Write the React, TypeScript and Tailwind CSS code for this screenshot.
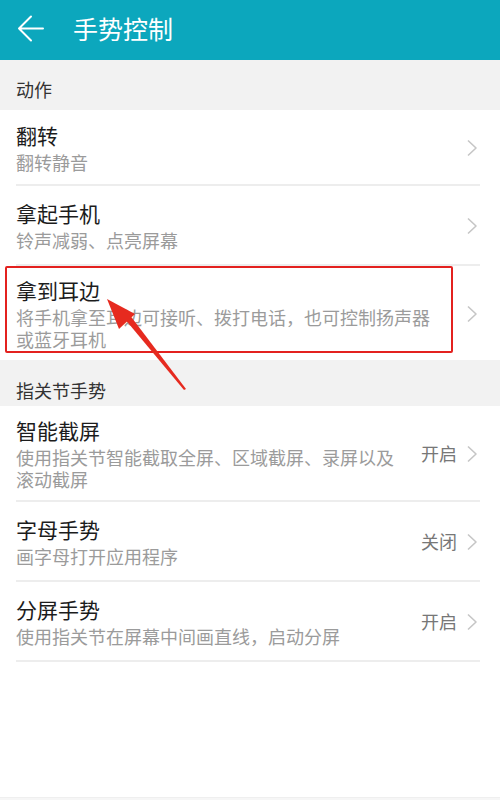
import React from "react";

type Item = {
  title: string;
  desc: string;
  value?: string;
  first?: boolean;
  last?: boolean;
};

const actions: Item[] = [
  { title: "翻转", desc: "翻转静音", first: true },
  { title: "拿起手机", desc: "铃声减弱、点亮屏幕" },
  { title: "拿到耳边", desc: "将手机拿至耳边可接听、拨打电话，也可控制扬声器或蓝牙耳机", last: true },
];

const knuckle: Item[] = [
  { title: "智能截屏", desc: "使用指关节智能截取全屏、区域截屏、录屏以及滚动截屏", value: "开启" },
  { title: "字母手势", desc: "画字母打开应用程序", value: "关闭" },
  { title: "分屏手势", desc: "使用指关节在屏幕中间画直线，启动分屏", value: "开启" },
];

function Chevron() {
  return (
    <svg width="12" height="18" viewBox="0 0 12 18" fill="none" className="shrink-0">
      <path d="M2 1.5 L10 9 L2 16.5" stroke="#c6c6c6" strokeWidth="1.6" strokeLinejoin="round" />
    </svg>
  );
}

function Row({ item }: { item: Item }) {
  return (
    <div className="pl-4">
      <div
        className={`flex items-center pt-[11px] pb-[10px] ${
          item.first ? "min-h-[76px]" : "min-h-[80px]"
        } ${item.last ? "pr-[22px]" : "border-b-2 border-[#ededed] mr-[20px] pr-[2px]"}`}
      >
        <div className="flex-1 min-w-0 pr-[14px]">
          <div className="text-[21px] leading-[26px] text-[#1c1c1c]">{item.title}</div>
          <div className="mt-[3px] text-[18px] leading-[22px] text-[#9b9b9b]">{item.desc}</div>
        </div>
        {item.value && <span className="mr-[9px] text-[18px] text-[#777] whitespace-nowrap">{item.value}</span>}
        <span className={item.value ? "" : "ml-[10px]"}>
          <Chevron />
        </span>
      </div>
    </div>
  );
}

function Section({ label, pad }: { label: string; pad: string }) {
  return (
    <div className={`bg-[#f2f2f2] px-4 text-[18px] leading-[24px] text-[#333] ${pad}`}>{label}</div>
  );
}

export default function App() {
  return (
    <div
      className="relative w-[500px] h-[800px] overflow-hidden bg-white flex flex-col"
      style={{ fontFamily: '"Noto Sans CJK SC", "Noto Sans", sans-serif' }}
    >
      {/* top bar */}
      <div className="h-[60px] bg-[#0ca7bd] flex items-center shrink-0">
        <svg width="60" height="60" viewBox="0 0 60 60" fill="none" className="shrink-0 -mt-[4px]">
          <path d="M43 30.5 H19 M31 18.5 L19 30.5 L31 42.5" stroke="white" strokeWidth="2" strokeLinecap="round" strokeLinejoin="round" />
        </svg>
        <span className="ml-[13px] text-[25px] text-white -mt-[3px]">手势控制</span>
      </div>

      <Section label="动作" pad="h-[50px] pt-[17px]" />
      {actions.map((it) => (
        <Row key={it.title} item={it} />
      ))}

      <Section label="指关节手势" pad="h-[46px] pt-[18px]" />
      {knuckle.map((it) => (
        <Row key={it.title} item={it} />
      ))}

      <div className="flex-1" />
      <div className="h-[3px] shrink-0 bg-[#f6f6f6] border-t border-[#efefef]" />

      {/* annotation: red box */}
      <div className="absolute left-[5px] top-[266px] w-[448px] h-[87px] border-2 border-[#e3211f] rounded-[2px] pointer-events-none" />

      {/* annotation: arrow */}
      <svg className="absolute left-0 top-0 pointer-events-none" width="500" height="800" viewBox="0 0 500 800">
        <polygon points="107,299 135,314 119,329" fill="#e62a1f" />
        <polygon points="124,318 129,314 186,389 184,390" fill="#e62a1f" />
      </svg>
    </div>
  );
}
